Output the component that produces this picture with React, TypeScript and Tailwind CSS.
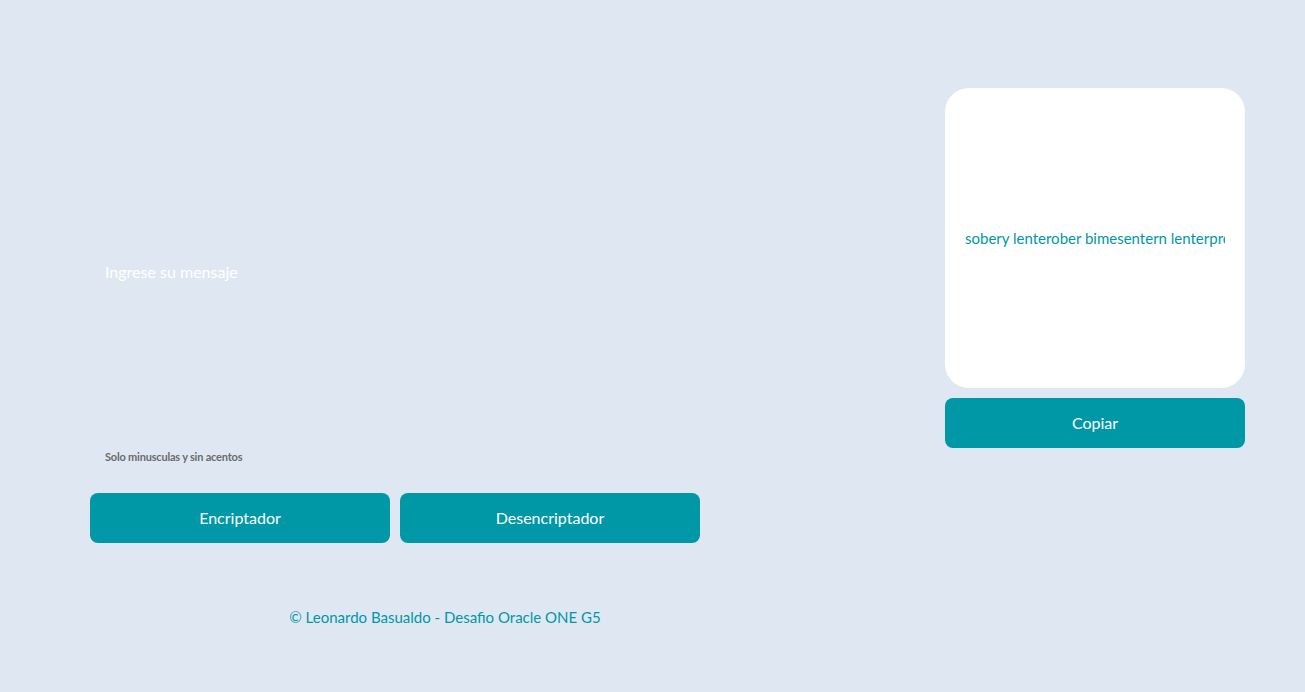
import * as React from "react";

export default function App() {
  const [text, setText] = React.useState("");
  const output = "sobery lenterober bimesentern lenterprober";

  return (
    <div className="min-h-screen w-full bg-[#dfe8f2] font-['Lato',sans-serif]">
      <div className="flex">
        {/* left column */}
        <div className="ml-[90px] flex w-[710px] flex-col">
          <textarea
            value={text}
            onChange={(e) => setText(e.target.value)}
            placeholder="Ingrese su mensaje"
            className="mt-[252px] h-[190px] w-full resize-none bg-transparent px-[15px] py-[8px] text-[16px] leading-[24px] text-[#0097a7] outline-none placeholder:text-white"
          />
          <p className="mt-[8px] pl-[15px] text-[11px] font-bold leading-[14px] tracking-[-0.2px] text-[#6b6b6b]">
            Solo minusculas y sin acentos
          </p>
          <div className="mt-[29px] flex gap-[10px]">
            <button className="h-[50px] w-[300px] rounded-[8px] bg-[#0097a7] text-[16px] text-white">
              Encriptador
            </button>
            <button className="h-[50px] w-[300px] rounded-[8px] bg-[#0097a7] text-[16px] text-white">
              Desencriptador
            </button>
          </div>
          <footer className="mt-[64px] text-center text-[15px] leading-[20px] text-[#0097a7]">
            © Leonardo Basualdo - Desafio Oracle ONE G5
          </footer>
        </div>

        {/* right column */}
        <div className="ml-[145px] flex w-[300px] flex-col gap-[10px] pt-[88px]">
          <div className="flex h-[300px] items-center overflow-hidden rounded-[24px] bg-white px-[20px]">
            <p className="w-full overflow-hidden whitespace-nowrap text-[15px] leading-[20px] text-[#0097a7]">
              {output}
            </p>
          </div>
          <button className="h-[50px] w-full rounded-[8px] bg-[#0097a7] text-[16px] text-white">
            Copiar
          </button>
        </div>
      </div>
    </div>
  );
}
